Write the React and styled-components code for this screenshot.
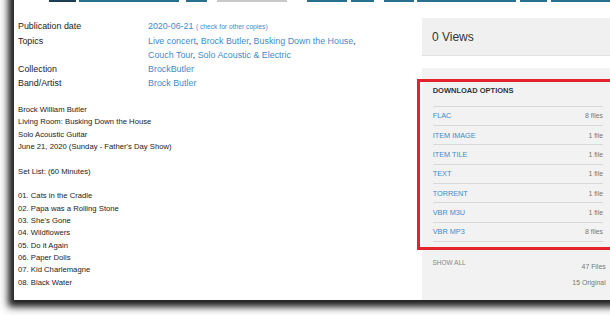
import React from "react";
import styled, { createGlobalStyle } from "styled-components";

const GlobalStyle = createGlobalStyle`
    body {
        margin: 0;
        background: #fff;
        font-family: "Liberation Sans", Arial, sans-serif;
        color: #333;
    }
`

const Page = styled.div`
    width: 610px;
    height: 315px;
    overflow: hidden;
    background: #fff;
`

const Frame = styled.div`
    margin: -20px 0 0 14px;
    padding-top: 20px;
    width: 620px;
    height: 320px;
    box-sizing: border-box;
    background: #fff;
    display: flex;
    flex-direction: column;
    box-shadow: -4px 5px 6px 1px rgba(0, 0, 0, 0.8), -7px 8px 9px rgba(0, 0, 0, 0.35);
`

const TopStrip = styled.div`
    display: flex;
    height: 2px;
`

const Tab = styled.span`
    width: ${(p) => p.w}px;
    margin-left: ${(p) => p.gap}px;
    background: ${(p) => p.color || "#27708f"};
`

const Columns = styled.div`
    flex: 1;
    display: grid;
    grid-template-columns: 403.7px 190px;
    padding-left: 4px;
`

const LeftCol = styled.div`
    padding-top: 17px;
`

const MetaGrid = styled.div`
    display: grid;
    grid-template-columns: 130px 1fr;
    font-size: 8.9px;
    line-height: 14px;
    color: #222;
`

const Link = styled.a`
    color: #428bca;
    text-decoration: none;
`

const Small = styled.span`
    font-size: 6.7px;
    color: #428bca;
`

const Description = styled.div`
    margin-top: 14px;
    font-size: 7.7px;
    line-height: 12.35px;
    color: #222;
`

const Block = styled.div`
    & + & {
        margin-top: 12.35px;
    }
`

const RightCol = styled.div`
    display: flex;
    flex-direction: column;
`

const ViewsBox = styled.div`
    margin-top: 16px;
    height: 38px;
    box-sizing: border-box;
    background: #f0f0f0;
    border-bottom: 1px solid #e0e0e0;
    padding-left: 10.3px;
    display: flex;
    align-items: center;
    font-size: 12px;
    color: #333;
`

const Panel = styled.div`
    margin-top: 12px;
    flex: 1;
    background: #f2f2f2;
    padding-top: 11px;
`

const RedBox = styled.div`
    margin: 0 -5px 0 -4.7px;
    border: 3px solid #e3222b;
    padding: 0 10.7px 5px 12.7px;
`

const Heading = styled.div`
    padding: 2.2px 0 8.5px;
    line-height: 13px;
    font-size: 7.5px;
    font-weight: 700;
    color: #333;
    border-bottom: 1px solid #d8d8d8;
`

const Row = styled.div`
    height: 18.33px;
    display: flex;
    align-items: center;
    justify-content: space-between;
    border-bottom: 1px solid #d8d8d8;
`

const Format = styled.a`
    font-size: 7.3px;
    color: #428bca;
    text-decoration: none;
`

const Count = styled.span`
    font-size: 6.9px;
    color: #777;
`

const Footer = styled.div`
    margin-top: 7px;
    display: flex;
    justify-content: space-between;
    padding: 0 6px 0 10.7px;
`

const ShowAll = styled.span`
    font-size: 6.5px;
    line-height: 12px;
    color: #888;
`

const Totals = styled.div`
    padding-top: 2px;
    text-align: right;
    font-size: 6.9px;
    line-height: 16px;
    color: #777;
`

const tabs = [
    { w: 27, gap: 35, color: "#1d3f55" },
    { w: 100, gap: 3 },
    { w: 21, gap: 7 },
    { w: 70, gap: 10, color: "#c9c9c9" },
    { w: 40, gap: 20 },
    { w: 23, gap: 4 },
    { w: 30, gap: 10 },
    { w: 99, gap: 3 },
    { w: 27, gap: 4 },
    { w: 80, gap: 4 },
];

const formats = [
    ["FLAC", "8 files"],
    ["ITEM IMAGE", "1 file"],
    ["ITEM TILE", "1 file"],
    ["TEXT", "1 file"],
    ["TORRENT", "1 file"],
    ["VBR M3U", "1 file"],
    ["VBR MP3", "8 files"],
];

const setList = [
    "01. Cats in the Cradle",
    "02. Papa was a Rolling Stone",
    "03. She's Gone",
    "04. Wildflowers",
    "05. Do it Again",
    "06. Paper Dolls",
    "07. Kid Charlemagne",
    "08. Black Water",
];

const App = () => {
    return (
        <Page>
            <GlobalStyle />
            <Frame>
                <TopStrip>
                    {tabs.map((t, i) => (
                        <Tab key={i} w={t.w} gap={t.gap} color={t.color} />
                    ))}
                </TopStrip>
                <Columns>
                    <LeftCol>
                        <MetaGrid>
                            <span>Publication date</span>
                            <span>
                                <Link>2020-06-21</Link> <Small>( check for other copies)</Small>
                            </span>
                            <span>Topics</span>
                            <span>
                                <Link>Live concert</Link>, <Link>Brock Butler</Link>, <Link>Busking Down the House</Link>,
                                <br />
                                <Link>Couch Tour</Link>, <Link>Solo Acoustic &amp; Electric</Link>
                            </span>
                            <span>Collection</span>
                            <Link>BrockButler</Link>
                            <span>Band/Artist</span>
                            <Link>Brock Butler</Link>
                        </MetaGrid>
                        <Description>
                            <Block>
                                <div>Brock William Butler</div>
                                <div>Living Room: Busking Down the House</div>
                                <div>Solo Acoustic Guitar</div>
                                <div>June 21, 2020 (Sunday - Father's Day Show)</div>
                            </Block>
                            <Block>Set List: (60 Minutes)</Block>
                            <Block>
                                {setList.map((s) => (
                                    <div key={s}>{s}</div>
                                ))}
                            </Block>
                        </Description>
                    </LeftCol>
                    <RightCol>
                        <ViewsBox>0 Views</ViewsBox>
                        <Panel>
                            <RedBox>
                                <Heading>DOWNLOAD OPTIONS</Heading>
                                {formats.map(([name, count]) => (
                                    <Row key={name}>
                                        <Format>{name}</Format>
                                        <Count>{count}</Count>
                                    </Row>
                                ))}
                            </RedBox>
                            <Footer>
                                <ShowAll>SHOW ALL</ShowAll>
                                <Totals>
                                    <div>47 Files</div>
                                    <div>15 Original</div>
                                </Totals>
                            </Footer>
                        </Panel>
                    </RightCol>
                </Columns>
            </Frame>
        </Page>
    );
}

export default App;
